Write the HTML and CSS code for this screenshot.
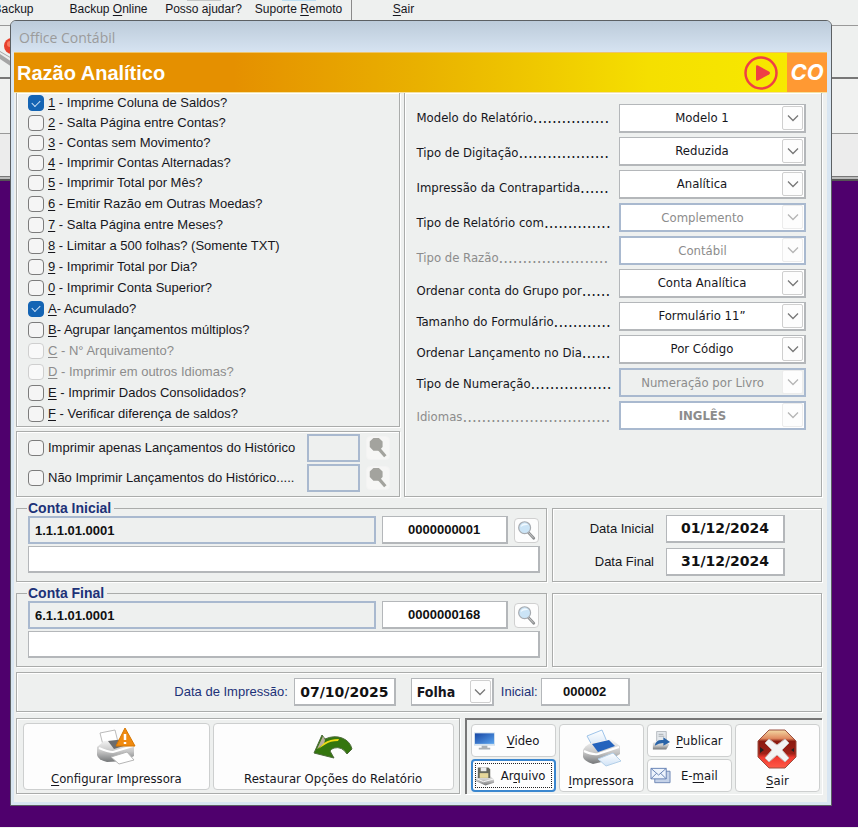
FILE: index.html
```html
<!DOCTYPE html>
<html lang="pt-BR">
<head>
<meta charset="utf-8">
<title>Office Contábil - Razão Analítico</title>
<link rel="stylesheet" href="styles.css">
</head>
<body>
<svg class="defs" aria-hidden="true">
  <defs>
    <linearGradient id="steel" x1="0" y1="0" x2="0" y2="1"><stop offset="0" stop-color="#fafafa"/><stop offset=".55" stop-color="#c4c4c4"/><stop offset="1" stop-color="#747678"/></linearGradient>
    <linearGradient id="blue" x1="0" y1="0" x2="1" y2="1"><stop offset="0" stop-color="#1746a4"/><stop offset="1" stop-color="#5aa4ee"/></linearGradient>
    <linearGradient id="paper" x1="0" y1="0" x2="0" y2="1"><stop offset="0" stop-color="#fff"/><stop offset="1" stop-color="#cfe2f6"/></linearGradient>
    <linearGradient id="stop" x1="0" y1="0" x2="0" y2="1"><stop offset="0" stop-color="#f3d9a4"/><stop offset=".22" stop-color="#e08a60"/><stop offset=".3" stop-color="#8a1a10"/><stop offset=".62" stop-color="#a02016"/><stop offset=".72" stop-color="#f03a30"/><stop offset="1" stop-color="#ff5a48"/></linearGradient>
    <symbol id="chevron" viewBox="0 0 12 8"><path d="M1 1.5 6 6.5 11 1.5" fill="none" stroke="currentColor" stroke-width="1.3"/></symbol>
    <symbol id="lens" viewBox="0 0 24 24"><path d="m14 14 6.500 7" stroke="#8e9092" stroke-width="3" stroke-linecap="round"/><path d="m14 14 6 6.500" stroke="#d0d0d0" stroke-width="1"/><circle cx="10.500" cy="9.500" r="6.500" fill="#cbe4f6" stroke="#a7abb0" stroke-width="1.300"/><path d="M6 9a5 5 0 0 1 9-2c-3-1-6 0-9 2z" fill="#f2faff"/></symbol>
    <symbol id="lens-off" viewBox="0 0 24 24"><path d="m13 13 7 8" stroke="#a3a39e" stroke-width="3.500"/><path d="M7 1h6l4 4v6l-4 4H7l-4-4V5z" fill="#a3a39e"/></symbol>
  </defs>
</svg>
<div class="app">
  <nav class="toolbar">
    <a href="#">Backup</a>
    <a href="#">Backup <u>O</u>nline</a>
    <a href="#" class="tip-gray">Posso ajudar?</a>
    <a href="#" class="tip-blue">Suporte <u>R</u>emoto</a>
    <span class="divider"></span>
    <a href="#"><u>S</u>air</a>
  </nav>
  <div class="band band-one">
    <svg class="arm" viewBox="0 0 12 34" aria-hidden="true"><circle cx="12" cy="10" r="8" fill="#e8402c"/><circle cx="10" cy="8" r="3" fill="#f77b62"/><path d="M0 15 12 22V31L0 23z" fill="#a5a5a5"/><path d="M0 16 12 23v3L0 18z" fill="#ececec"/></svg>
  </div>
  <div class="band band-two"></div>
  <div class="band band-three"></div>
  <div class="band band-four"></div>
</div>

<main class="dialog">
  <div class="titlebar">Office Contábil</div>
  <header class="banner">
    <h1>Razão Analítico</h1>
    <button type="button" class="play" aria-label="Play"><svg viewBox="0 0 36 36"><circle cx="18" cy="18" r="15.500" fill="none" stroke="#ef4045" stroke-width="2.500"/><path d="M13 11.500q0-2 2-1l11 6q2 1.500 0 3l-11 6q-2 1-2-1z" fill="#ef4045"/></svg></button>
    <span class="co">CO</span>
  </header>

  <form class="content">
    <div class="top">
      <div class="left">
        <section class="panel open checks">
          <div class="rows">
            <label><input type="checkbox" checked><span><u>1</u> - Imprime Coluna de Saldos?</span></label>
            <label><input type="checkbox"><span><u>2</u> - Salta Página entre Contas?</span></label>
            <label><input type="checkbox"><span><u>3</u> - Contas sem Movimento?</span></label>
            <label><input type="checkbox"><span><u>4</u> - Imprimir Contas Alternadas?</span></label>
            <label><input type="checkbox"><span><u>5</u> - Imprimir Total por Mês?</span></label>
          </div>
          <div class="rows loose">
            <label><input type="checkbox"><span><u>6</u> - Emitir Razão em Outras Moedas?</span></label>
            <label><input type="checkbox"><span><u>7</u> - Salta Página entre Meses?</span></label>
            <label><input type="checkbox"><span><u>8</u> - Limitar a 500 folhas? (Somente TXT)</span></label>
            <label><input type="checkbox"><span><u>9</u> - Imprimir Total por Dia?</span></label>
            <label><input type="checkbox"><span><u>0</u> - Imprimir Conta Superior?</span></label>
            <label><input type="checkbox" checked><span><u>A</u>- Acumulado?</span></label>
            <label><input type="checkbox"><span><u>B</u>- Agrupar lançamentos múltiplos?</span></label>
            <label class="off"><input type="checkbox" disabled><span><u>C</u> - N° Arquivamento?</span></label>
            <label class="off"><input type="checkbox" disabled><span><u>D</u> - Imprimir em outros Idiomas?</span></label>
            <label><input type="checkbox"><span><u>E</u> - Imprimir Dados Consolidados?</span></label>
            <label><input type="checkbox"><span><u>F</u> - Verificar diferença de saldos?</span></label>
          </div>
        </section>
        <section class="panel history">
          <div class="history-row">
            <label><input type="checkbox"><span>Imprimir apenas Lançamentos do Histórico</span></label>
            <input class="field locked" aria-label="Histórico a imprimir" disabled>
            <button type="button" class="lens" aria-label="Procurar" disabled><svg><use href="#lens-off"/></svg></button>
          </div>
          <div class="history-row">
            <label><input type="checkbox"><span>Não Imprimir Lançamentos do Histórico.....</span></label>
            <input class="field locked" aria-label="Histórico a omitir" disabled>
            <button type="button" class="lens" aria-label="Procurar" disabled><svg><use href="#lens-off"/></svg></button>
          </div>
        </section>
      </div>

      <section class="panel open options">
        <div class="labels">
          <label for="s1">Modelo do Relatório<i>................</i></label>
          <label for="s2">Tipo de Digitação<i>...................</i></label>
          <label for="s3">Impressão da Contrapartida<i>......</i></label>
          <label for="s4">Tipo de Relatório com<i>..............</i></label>
          <label for="s5" class="off">Tipo de Razão<i>.......................</i></label>
          <label for="s6" class="short">Ordenar conta do Grupo por<i>......</i></label>
          <label for="s7" class="short">Tamanho do Formulário<i>............</i></label>
          <label for="s8" class="short">Ordenar Lançamento no Dia<i>......</i></label>
          <label for="s9" class="short">Tipo de Numeração<i>.................</i></label>
          <label for="s10" class="off">Idiomas<i>...............................</i></label>
        </div>
        <div class="selects">
          <div class="combo"><select id="s1"><option>Modelo 1</option></select><span><svg><use href="#chevron"/></svg></span></div>
          <div class="combo"><select id="s2"><option>Reduzida</option></select><span><svg><use href="#chevron"/></svg></span></div>
          <div class="combo"><select id="s3"><option>Analítica</option></select><span><svg><use href="#chevron"/></svg></span></div>
          <div class="combo idle"><select id="s4" disabled><option>Complemento</option></select><span><svg><use href="#chevron"/></svg></span></div>
          <div class="combo idle"><select id="s5" disabled><option>Contábil</option></select><span><svg><use href="#chevron"/></svg></span></div>
          <div class="combo"><select id="s6"><option>Conta Analítica</option></select><span><svg><use href="#chevron"/></svg></span></div>
          <div class="combo"><select id="s7"><option>Formulário 11”</option></select><span><svg><use href="#chevron"/></svg></span></div>
          <div class="combo"><select id="s8"><option>Por Código</option></select><span><svg><use href="#chevron"/></svg></span></div>
          <div class="combo idle gray"><select id="s9" disabled><option>Numeração por Livro</option></select><span><svg><use href="#chevron"/></svg></span></div>
          <div class="combo idle strong"><select id="s10" disabled><option>INGLÊS</option></select><span><svg><use href="#chevron"/></svg></span></div>
        </div>
      </section>
    </div>

    <div class="account">
      <fieldset>
        <legend>Conta Inicial</legend>
        <div class="account-row">
          <input class="field locked" aria-label="Conta inicial" value="1.1.1.01.0001" readonly>
          <input class="field center" aria-label="Código inicial" value="0000000001">
          <button type="button" class="lens" aria-label="Procurar"><svg><use href="#lens"/></svg></button>
        </div>
        <input class="field slim" aria-label="Descrição da conta inicial">
      </fieldset>
      <section class="panel dates">
        <label for="d1">Data Inicial</label><input id="d1" class="field date" value="01/12/2024">
        <label for="d2">Data Final</label><input id="d2" class="field date" value="31/12/2024">
      </section>
    </div>

    <div class="account">
      <fieldset>
        <legend>Conta Final</legend>
        <div class="account-row">
          <input class="field locked" aria-label="Conta final" value="6.1.1.01.0001" readonly>
          <input class="field center" aria-label="Código final" value="0000000168">
          <button type="button" class="lens" aria-label="Procurar"><svg><use href="#lens"/></svg></button>
        </div>
        <input class="field slim" aria-label="Descrição da conta final">
      </fieldset>
      <section class="panel"></section>
    </div>

    <section class="panel print">
      <label for="p1">Data de Impressão:</label>
      <input id="p1" class="field date" value="07/10/2025">
      <div class="combo page"><select aria-label="Numerar por"><option>Folha</option></select><span><svg><use href="#chevron"/></svg></span></div>
      <label for="p2">Inicial:</label>
      <input id="p2" class="field center number" value="000002">
    </section>

    <div class="actions">
      <section class="panel setup">
        <button type="button" class="btn tall">
          <svg class="big" viewBox="0 0 40 38"><path d="M4 6 19 3l3 12-15 3z" fill="#fff" stroke="#bbb"/><path d="M1 20 8 14 30 12l8 5v12l-9 5-18 1q-9-2-10-7z" fill="url(#steel)"/><path d="m12 14 17-2 5 5-16 5z" fill="#6b6c6e"/><path d="M3 21q9 4 14 4l20-6" fill="none" stroke="#fff" stroke-width="2"/><path d="m15 30 16-5 7 8-15 4z" fill="#fff" stroke="#b5b5b5"/><path d="m29 1 10 18H20z" fill="#f08a10" stroke="#d77700"/><path d="M29 7v6M29 15v2" stroke="#fff" stroke-width="2.500"/></svg>
          <span><u>C</u>onfigurar Impressora</span>
        </button>
        <button type="button" class="btn tall">
          <svg class="big" viewBox="0 0 40 38"><path d="M1 26 9 8l3 4q9-4 17-1 8 3 10 11l-5 5q-5-8-13-6-3 1-4 3l4 7z" fill="#34760e" stroke="#4c6a3a" stroke-width="1"/><path d="m4 22 6-13 2 4-1 4z" fill="#b9ad9c"/><path d="m5 22 6-6q6-4 15-4l-1 2q-8 0-12 3z" fill="#f0dc12"/></svg>
          <span>Restaurar Opções do Relatório</span>
        </button>
      </section>
      <section class="output">
        <button type="button" class="btn"><svg class="small" viewBox="0 0 22 20"><path d="M0 1h22v14H0z" fill="#d4e2ee"/><path d="M1 2h20v11H1z" fill="url(#blue)"/><path d="M8 15h6v2h3v2H5v-2h3z" fill="#aab0b5"/></svg><span><u>V</u>ideo</span></button>
        <button type="button" class="btn tall both">
          <svg class="big" viewBox="0 0 40 38"><path d="M6 7 21 1l6 14-14 5z" fill="url(#paper)" stroke="#9ec4ea"/><path d="M2 22q1-5 8-8l20-4 9 7v8l-10 6-17 4q-9-3-10-7z" fill="url(#steel)"/><path d="m11 15 17-4 6 6-17 6z" fill="#2463bd"/><path d="M3 22q8 4 14 3l21-7" fill="none" stroke="#fff" stroke-width="2"/><path d="m17 30 15-6 8 8-15 5z" fill="url(#paper)" stroke="#b3cfe8"/></svg>
          <span><u>I</u>mpressora</span>
        </button>
        <button type="button" class="btn"><svg class="small" viewBox="0 0 22 20"><path d="M7 0h10v13H7z" fill="#e5e9ed" stroke="#b5babf"/><path d="M9 3h5M9 5h6" stroke="#a8adb2"/><path d="m3 12 4-2h10l3 4-3 5H3z" fill="url(#steel)"/><path d="M5 15q1-7 9-6V6l7 5-7 4v-3q-5 0-9 3z" fill="#2a64a8"/></svg><span><u>P</u>ublicar</span></button>
        <button type="button" class="btn tall both">
          <svg class="stop" viewBox="0 0 40 40"><path d="M12 1h16l11 11v16L28 39H12L1 28V12z" fill="url(#stop)" stroke="#9b5143"/><path d="m12 10 8 6 8-6 4 4-7 7 7 8-4 4-8-7-8 7-4-4 7-8-7-7z" fill="#f3f3f3" stroke="#c9b8b4"/><path d="m3 18 4 3-4 3zM37 19l-3 2 3 2z" fill="#222"/></svg>
          <span><u>S</u>air</span>
        </button>
        <button type="button" class="btn focus"><svg class="small" viewBox="0 0 22 20"><path d="m1 11 14-3 6 6v3l-9 3L1 15z" fill="url(#steel)"/><path d="M4 1h11l2 2v9H4z" fill="#66675c"/><path d="M7 1h6v4H7z" fill="#eee"/><path d="M6 7h9v5H6z" fill="#e6d79a"/><path d="m1 12 9 4 11-3" fill="none" stroke="#f8f8f8"/></svg><span>Ar<u>q</u>uivo</span></button>
        <button type="button" class="btn"><svg class="small" viewBox="0 0 22 20"><path d="M5 5h16v12H5z" fill="#c5d2e8" stroke="#6f87b5"/><path d="M1 2h16v11H1z" fill="#edf3fc" stroke="#6580b3"/><path d="m1 2 8 7 8-7M1 13l6-6M17 13l-6-6" fill="none" stroke="#6580b3"/></svg><span>E-<u>m</u>ail</span></button>
      </section>
    </div>
  </form>
</main>
</body>
</html>
```
FILE: styles.css
```css
* { box-sizing: border-box; }

body {
  margin: 0;
  min-height: 100vh;
  position: relative;
  background: #4f006d;
  border-bottom: 1px solid #eef0ef;
  font: 13px/16px "Liberation Sans", Arial, sans-serif;
  color: #16161c;
}

.defs { position: absolute; width: 0; height: 0; }

/* Main window behind the dialog */
.toolbar {
  display: flex;
  height: 25px;
  overflow: hidden;
  background: #eef0ef;
  font-size: 12px;
}
.toolbar a {
  flex: 0 0 95px;
  text-align: center;
  color: inherit;
  text-decoration: none;
}
.toolbar a:first-child { margin-left: -34px; }
.toolbar a::before {
  content: "";
  display: block;
  width: 34px;
  height: 1px;
  margin: 0 auto;
}
.tip-gray::before { background: #c4c6c6; }
.tip-blue::before { background: #bcdcf0; }
.divider { width: 1px; margin: 0 4px 5px 5px; background: #8a8a8a; }

.band { background: #eef0ef; border-top: 1px solid #999; }
.band-one { height: 54px; padding-top: 10px; border-bottom: 2px solid #777; }
.band-two { height: 54px; border-top: 0; background: #f0f1f0; }
.band-three { height: 43px; background: #ececec; }
.band-four { height: 5px; border-top: 1px solid #777; border-bottom: 2px solid #555; background: #bbb; }
.arm { display: block; width: 12px; height: 34px; }

/* Dialog window */
.dialog {
  position: absolute;
  top: 20px;
  left: 10px;
  right: 26px;
  padding: 0 4px 3px 3px;
  border: 1px solid #5c6063;
  border-radius: 6px 6px 0 0;
  background: #d9e6f2;
}
.titlebar {
  height: 31px;
  margin: 0 -4px 0 -3px;
  padding-left: 8px;
  border-radius: 5px 5px 0 0;
  background: linear-gradient(#bccbda, #d6e3f1);
  font: 14px/34px "Open Sans", "Noto Sans", sans-serif;
  color: #9b9b9b;
}
.banner {
  display: flex;
  align-items: center;
  height: 41px;
  border-top: 1px solid #eec46a;
  border-bottom: 1px solid #f6e1a0;
  background: linear-gradient(90deg, #e59000 0%, #e59000 27%, #e9b100 50%, #f5df00 78%, #f7e900 95%);
}
.banner h1 {
  flex: 1;
  margin: 0;
  padding-left: 3px;
  font-size: 20px;
  line-height: 38px;
  color: #fff;
}
.play { width: 36px; height: 36px; margin-right: 8px; padding: 0; border: 0; background: none; }
.play svg { display: block; width: 36px; height: 36px; }
.co {
  width: 40px;
  align-self: stretch;
  background: #ff9933;
  color: #fff;
  font: italic 700 22px/38px Inter, sans-serif;
  text-align: center;
}

.content {
  display: flex;
  flex-direction: column;
  padding: 0 5px 8px 2px;
  background: #eef0ef;
}
.panel, fieldset {
  border: 1px solid #aaacab;
  box-shadow: 1px 1px 0 #fff, inset 1px 1px 0 #fff;
}
.panel.open { border-top: 0; }
.off { color: #8c8c8c; }

.top { display: grid; grid-template-columns: 384fr 417fr; gap: 4px; }
.left { display: flex; flex-direction: column; gap: 4px; }

.checks { padding: 0 0 2px 11px; }
.rows label, .history-row label { display: flex; align-items: center; gap: 4px; white-space: nowrap; }
.rows label { height: 20px; }
.rows.loose label { height: 21px; }

input[type="checkbox"] {
  appearance: none;
  display: grid;
  place-items: center;
  flex: none;
  width: 16px;
  height: 16px;
  margin: 0;
  border: 1px solid #7c7c7c;
  border-radius: 4px;
  background: #f5f5f5;
}
input[type="checkbox"]:disabled { border-color: #cfcfcf; background: #f9f9f9; }
input[type="checkbox"]:checked { border-color: #1464b4; background: #1464b4; }
input[type="checkbox"]:checked::before {
  content: "";
  width: 7px;
  height: 4px;
  margin-bottom: 2px;
  border: solid #cfe3f7;
  border-width: 0 0 1px 1px;
  transform: rotate(-45deg);
}

.history { display: flex; flex-direction: column; gap: 2px; padding: 2px 9px 4px 11px; }
.history-row { display: grid; grid-template-columns: 1fr 53px 24px; gap: 6px; align-items: center; }

.field {
  width: 100%;
  height: 28px;
  min-width: 0;
  margin: 0;
  padding: 0 5px;
  border: 2px solid #b4b7ba;
  border-width: 1px 2px 2px 1px;
  border-radius: 0;
  outline: 0;
  background: #fff;
  font: bold 13px/16px "Liberation Sans", Arial, sans-serif;
  color: #111;
}
.field.locked { border: 2px solid #a9b9cf; background: #eef0ef; }
.field.center { text-align: center; }
.field.slim { height: 27px; }
.field.date { padding: 0; font: bold 14px/18px "DejaVu Sans", sans-serif; text-align: center; }

.lens {
  width: 24px;
  height: 24px;
  padding: 0;
  border: 1px solid #d0d0d0;
  border-radius: 4px;
  background: #fdfdfd;
}
.lens:disabled { border-color: #f3f3f3; background: #f6f6f5; }
.lens svg { display: block; width: 22px; height: 22px; }

.options {
  display: grid;
  grid-template-columns: 1fr 187px;
  padding: 7px 15px 0 11px;
}
.labels, .combo select { font: 13px/16px "DejaVu Sans Condensed", "DejaVu Sans", sans-serif; }
.labels { min-width: 0; }
.labels label { display: flex; align-items: center; height: 35px; overflow: hidden; white-space: nowrap; }
.labels .short { height: 31px; }
.labels i { font: 15px/16px "DejaVu Sans", sans-serif; }
.selects { display: flex; flex-direction: column; gap: 4px; padding-top: 4px; }

.combo { position: relative; height: 29px; }
.combo select {
  appearance: none;
  width: 100%;
  height: 100%;
  margin: 0;
  padding: 0 20px 0 0;
  border: 2px solid #b4b7ba;
  border-width: 1px 2px 2px 1px;
  border-radius: 0;
  background: #fff;
  color: #16161c;
  text-align-last: center;
}
.combo span {
  position: absolute;
  top: 2px;
  right: 3px;
  bottom: 3px;
  display: grid;
  place-items: center;
  width: 21px;
  border: 1px solid #cfcfcf;
  border-radius: 2px;
  background: #fdfdfd;
  color: #777;
  pointer-events: none;
}
.combo svg { width: 12px; height: 8px; }
.combo.idle select { border: 2px solid #a9b9cf; color: #8c8c8c; opacity: 1; }
.combo.idle span { border-color: #ececec; color: #b5b5b5; }
.combo.gray select { background: #eef0ef; }
.combo.strong select { font-weight: bold; }

.account { display: grid; grid-template-columns: 530fr 270fr; gap: 5px; margin-top: 4px; }
.account .panel { margin-top: 7px; }
fieldset {
  min-width: 0;
  margin: 0;
  padding: 0 6px 8px 11px;
  box-shadow: 1px 1px 0 #fff;
}
legend { margin-left: -1px; padding: 0 3px 0 1px; font-weight: bold; font-size: 14px; line-height: 14px; color: #1d3278; }
.account-row {
  display: grid;
  grid-template-columns: 1fr 126px 26px;
  gap: 6px;
  align-items: center;
  margin: 1px 0 2px;
}
.account-row .lens { width: 25px; height: 25px; }
fieldset .slim { display: block; }

.dates {
  display: grid;
  grid-template-columns: 1fr 119px;
  gap: 5px 12px;
  align-content: center;
  align-items: center;
  padding-right: 36px;
  text-align: right;
}

.print {
  display: flex;
  align-items: center;
  justify-content: center;
  height: 40px;
  margin-top: 5px;
  padding-right: 34px;
  color: #1d3278;
}
.print .date { width: 102px; margin-left: 6px; }
.page { width: 83px; height: 28px; margin: 0 7px 0 15px; }
.page select { padding-left: 5px; font-weight: bold; font-size: 14px; text-align-last: left; }
.print .number { width: 89px; margin-left: 3px; }

.actions { display: grid; grid-template-columns: 443fr 357fr; gap: 5px; margin-top: 6px; }
.setup { display: grid; grid-template-columns: 187fr 241fr; gap: 3px; padding: 4px 5px 3px 6px; }
.output {
  display: grid;
  grid-template-columns: repeat(4, 1fr);
  grid-template-rows: 33px 33px;
  gap: 2px 3px;
  padding: 4px 2px 2px 4px;
  border: solid #777;
  border-width: 2px 0 0 2px;
  box-shadow: 1px 1px 0 #fff;
}
.both { grid-row: span 2; }
.btn {
  display: flex;
  align-items: center;
  min-width: 0;
  padding: 0 3px 0 2px;
  border: 1px solid #cdcfcf;
  border-radius: 4px;
  background: #fdfdfd;
  font: 13px/16px "DejaVu Sans Condensed", "DejaVu Sans", sans-serif;
  color: #16161c;
  white-space: nowrap;
}
.btn span { flex: 1; }
.btn.tall { flex-direction: column; justify-content: flex-end; padding: 0 0 2px; }
.btn.tall span { flex: none; }
.small { width: 21px; height: 20px; }
.big { width: 40px; height: 38px; margin-bottom: 6px; }
.stop { width: 40px; height: 40px; margin-bottom: 4px; }
.btn.focus { padding: 0 2px 0 1px; border: 2px solid #3b87cf; outline: 1px dotted #222; outline-offset: -5px; }
u { text-underline-offset: 2px; }
```
